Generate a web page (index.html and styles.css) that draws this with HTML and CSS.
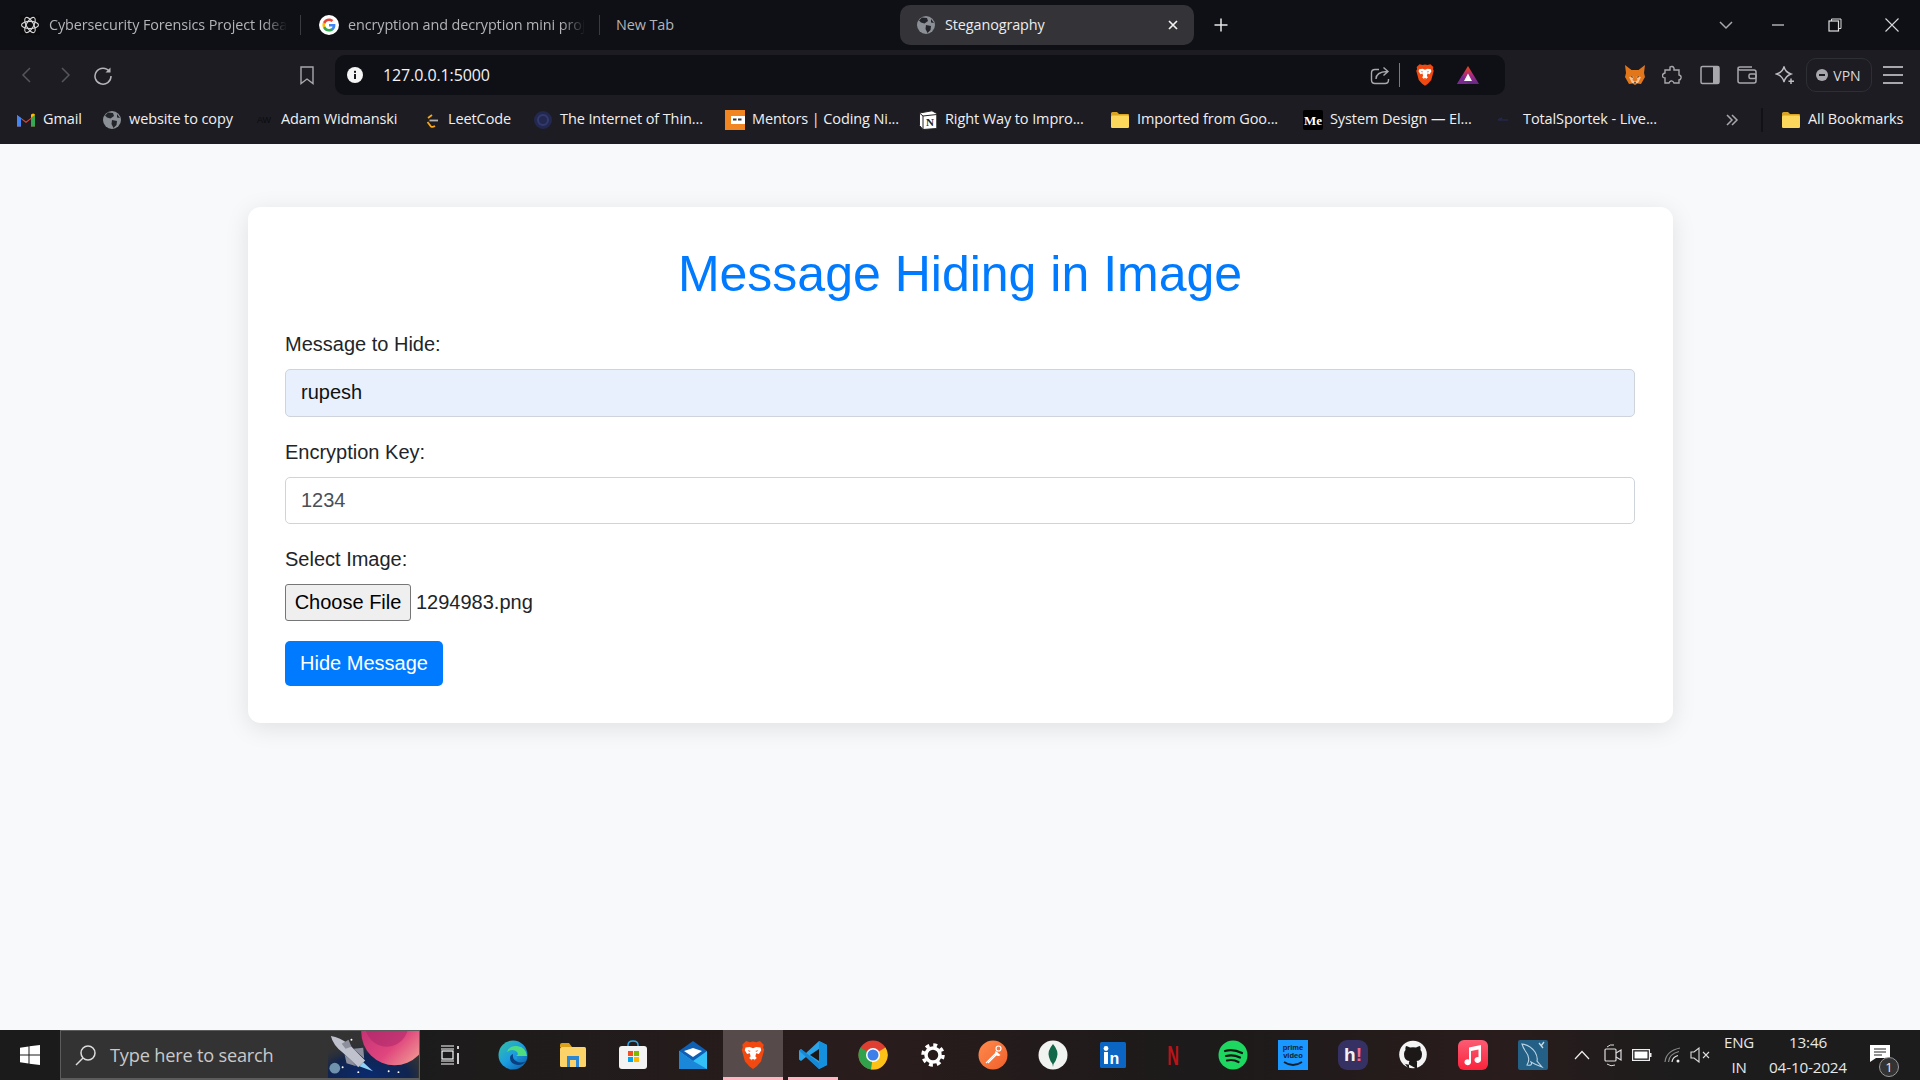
FILE: index.html
```html
<!DOCTYPE html>
<html lang="en">
<head>
<meta charset="utf-8">
<title>Steganography</title>
<link rel="stylesheet" href="styles.css">
</head>
<body>
<svg class="defs" width="0" height="0" aria-hidden="true">
  <defs>
    <symbol id="globe" viewBox="0 0 20 20">
      <circle cx="10" cy="10" r="9" fill="#8b8f96"/>
      <path d="M6 2.500 L11 3 L12 6 L8.500 8.500 L5 7.500 L3 5.500Z M10 10 L15 11 L14.500 15 L11.500 18 L9.500 14Z M15 4 L18 8 L15 7.500Z" fill="#24252b"/>
    </symbol>
    <symbol id="brave" viewBox="0 0 24 28">
      <path d="M5.500 1 L9 2 L12 1.300 L15 2 L18.500 1 L22 4.500 L21.500 7 L22.500 9 L19.500 20 L15.500 24.500 L12 27 L8.500 24.500 L4.500 20 L1.500 9 L2.500 7 L2 4.500Z" fill="#f1490f"/>
      <path d="M5 7 L9 6.500 L12 7.600 L15 6.500 L19 7 L19.700 9.500 L17.500 13 L15 12.300 L14.200 15.200 L15.500 16.800 L12 20 L8.500 16.800 L9.800 15.200 L9 12.300 L6.500 13 L4.300 9.500Z" fill="#fff"/>
      <path d="M7 9.600 L10 10.200 L8.400 11Z M17 9.600 L14 10.200 L15.600 11Z M10.500 18 L13.500 18 L12 22Z" fill="#f1490f"/>
    </symbol>
    <symbol id="folder" viewBox="0 0 20 20">
      <path d="M1 3.500 Q1 2 2.500 2 L7 2 L9 4 L18 4 Q19 4 19 5 L19 16 Q19 18 17 18 L3 18 Q1 18 1 16Z" fill="#d9a520"/>
      <rect x="1" y="5.500" width="18" height="12.500" rx="1.500" fill="#fbd75b"/>
    </symbol>
    <linearGradient id="planet" x1="0" y1="0" x2="1" y2="1">
      <stop offset="0" stop-color="#b3266e"/><stop offset=".6" stop-color="#e0467e"/><stop offset="1" stop-color="#f6b79a"/>
    </linearGradient>
    <radialGradient id="space" cx=".45" cy=".95" r=".75">
      <stop offset="0" stop-color="#0a2a70"/><stop offset=".6" stop-color="#10244f"/><stop offset="1" stop-color="#333" stop-opacity="0"/>
    </radialGradient>
    <linearGradient id="edgeg" x1="0" y1="0" x2="1" y2="1">
      <stop offset="0" stop-color="#35c1a0"/><stop offset=".5" stop-color="#1b9de2"/><stop offset="1" stop-color="#0c59a4"/>
    </linearGradient>
    <linearGradient id="musicg" x1="0" y1="0" x2="0" y2="1">
      <stop offset="0" stop-color="#fb5c74"/><stop offset="1" stop-color="#fa233b"/>
    </linearGradient>
    <linearGradient id="postg" x1="0" y1="0" x2="1" y2="1">
      <stop offset="0" stop-color="#ff8a4c"/><stop offset="1" stop-color="#f0602c"/>
    </linearGradient>
    <linearGradient id="batg" x1="0" y1="0" x2="0" y2="1">
      <stop offset="0" stop-color="#f1490f"/><stop offset=".55" stop-color="#a3288a"/><stop offset="1" stop-color="#5e2a86"/>
    </linearGradient>
  </defs>
</svg>

<div class="app">
  <header class="chrome">
    <div class="tabstrip">
      <div class="tab tab-first">
        <svg class="fav" viewBox="0 0 20 20"><rect width="20" height="20" fill="#0c0c0f"/><g fill="none" stroke="#d6d6d8" stroke-width="1.100"><ellipse cx="10" cy="10" rx="8.500" ry="3.600"/><ellipse cx="10" cy="10" rx="8.500" ry="3.600" transform="rotate(60 10 10)"/><ellipse cx="10" cy="10" rx="8.500" ry="3.600" transform="rotate(120 10 10)"/></g></svg>
        <span class="tab-title fade">Cybersecurity Forensics Project Idea</span>
      </div>
      <i class="tab-sep"></i>
      <div class="tab tab-second">
        <svg class="fav" viewBox="0 0 20 20"><circle cx="10" cy="10" r="10" fill="#fff"/><path d="M16.400 10.200c0-.5 0-.9-.1-1.300H10v2.500h3.600c-.2.800-.6 1.500-1.300 2v1.600h2.100c1.300-1.100 2-2.800 2-4.800z" fill="#4285f4"/><path d="M10 16.500c1.800 0 3.300-.6 4.400-1.600l-2.100-1.600c-.6.400-1.400.6-2.300.6-1.700 0-3.200-1.200-3.700-2.700H4.100v1.700C5.200 15.100 7.400 16.500 10 16.500z" fill="#34a853"/><path d="M6.300 11.200c-.3-.8-.3-1.600 0-2.400V7.100H4.100c-.9 1.800-.9 4 0 5.800z" fill="#fbbc05"/><path d="M10 5.900c1 0 1.800.3 2.500 1l1.900-1.900C13.200 4 11.700 3.400 10 3.400 7.400 3.400 5.200 4.900 4.100 7.100l2.200 1.700C6.800 7.100 8.300 5.900 10 5.900z" fill="#ea4335"/></svg>
        <span class="tab-title fade">encryption and decryption mini proj</span>
      </div>
      <i class="tab-sep"></i>
      <div class="tab tab-third"><span class="tab-title">New Tab</span></div>
      <div class="tab tab-active">
        <svg class="fav"><use href="#globe"/></svg>
        <span class="tab-title active-title">Steganography</span>
        <svg class="tab-close" viewBox="0 0 10 10"><path d="M1 1 L9 9 M9 1 L1 9" stroke="#f1f1f1" stroke-width="1.700"/></svg>
      </div>
      <div class="newtab"><svg class="w14" viewBox="0 0 14 14"><path d="M7 .5 V13.500 M.5 7 H13.500" stroke="#e6e6e6" stroke-width="1.500"/></svg></div>
      <div class="win-controls">
        <div class="chev"><svg class="w14" viewBox="0 0 14 14"><path d="M1 4 L7 10 L13 4" fill="none" stroke="#a8a8ac" stroke-width="1.500"/></svg></div>
        <div class="ctl"><svg class="w14" viewBox="0 0 14 14"><path d="M1 7 H13" stroke="#d4d4d4" stroke-width="1.200"/></svg></div>
        <div class="ctl"><svg class="w14" viewBox="0 0 14 14"><rect x="1" y="3" width="9.500" height="10" fill="none" stroke="#e0e0e0" stroke-width="1.200"/><path d="M3.500 3 V1 H13 V10.500 H10.500" fill="none" stroke="#e0e0e0" stroke-width="1"/></svg></div>
        <div class="ctl"><svg class="w14" viewBox="0 0 14 14"><path d="M.5 .5 L13.500 13.500 M13.500 .5 L.5 13.500" stroke="#d8d8d8" stroke-width="1.100"/></svg></div>
      </div>
    </div>

    <div class="toolbar">
      <div class="nav">
        <div class="navbtn"><svg class="w20" viewBox="0 0 20 20"><path d="M13 3 L6 10 L13 17" fill="none" stroke="#55565c" stroke-width="1.500"/></svg></div>
        <div class="navbtn"><svg class="w20" viewBox="0 0 20 20"><path d="M7 3 L14 10 L7 17" fill="none" stroke="#55565c" stroke-width="1.500"/></svg></div>
        <div class="navbtn"><svg class="w20" viewBox="0 0 20 20"><path d="M16.500 6.500 A8 8 0 1 0 18 11" fill="none" stroke="#b5b5b9" stroke-width="1.500"/><path d="M17.500 2.500 V7.500 H12.500Z" fill="#b5b5b9"/></svg></div>
        <div class="navbtn bookmark"><svg class="w20" viewBox="0 0 20 20"><path d="M4 2 H16 V18.500 L10 14 L4 18.500Z" fill="none" stroke="#a8a8ac" stroke-width="1.400"/></svg></div>
      </div>
      <div class="urlbar">
        <svg class="info" viewBox="0 0 16 16"><circle cx="8" cy="8" r="8" fill="#f5f5f5"/><rect x="7" y="7" width="2" height="5" fill="#16171c"/><rect x="7" y="3.800" width="2" height="2" fill="#16171c"/></svg>
        <span class="url">127.0.0.1:5000</span>
        <svg class="share" viewBox="0 0 20 20"><path d="M9 4.500 H5 Q1.500 4.500 1.500 8 V15 Q1.500 18.500 5 18.500 H15 Q18.500 18.500 18.500 15 V14" fill="none" stroke="#a8a8ac" stroke-width="1.400"/><path d="M6 14 Q6 7 17 6.500 M13.500 2.500 L18 6.500 L13.500 10.500" fill="none" stroke="#a8a8ac" stroke-width="1.400"/></svg>
        <i class="url-sep"></i>
        <svg class="brave-url"><use href="#brave"/></svg>
        <svg class="bat" viewBox="0 0 24 20"><path d="M12 1 L23 19 H1Z" fill="url(#batg)"/><path d="M1 19 L6.500 10 L12 19Z" fill="#7a2a8f"/><path d="M8 16 L12 8.500 L16 16Z" fill="#fff"/></svg>
      </div>
      <div class="exts">
        <div class="ext"><svg class="w22" viewBox="0 0 22 22"><path d="M1 1 L7.500 6 H14.500 L21 1 L20 9 L21 13 L17 20 L13.500 19.500 L11 21 L8.500 19.500 L5 20 L1 13 L2 9Z" fill="#e2761b"/><path d="M5 13 L9.500 12.500 L8.500 16 L11 18 L13.500 16 L12.500 12.500 L17 13 L14 19 H8Z" fill="#f6c49a"/><path d="M7 12 L9 13 L8 14Z M15 12 L13 13 L14 14Z M10 18 H12 L11 19.500Z" fill="#222"/></svg></div>
        <div class="ext"><svg class="w20" viewBox="0 0 20 20"><path d="M8 2 Q10.500 .5 12 3 V5 H17 V10 Q19.500 10.500 19 13 Q18.500 15 17 15 V18 H12 Q11 15.500 9 16 Q7.500 16.500 7 18 H3 V13 Q.5 13 .5 10.500 Q.5 8.500 3 8 V5 H8Z" fill="none" stroke="#a8a8ac" stroke-width="1.400"/></svg></div>
        <div class="ext"><svg class="w20" viewBox="0 0 20 20"><rect x="1" y="1.500" width="18" height="17" rx="1.500" fill="none" stroke="#a8a8ac" stroke-width="1.500"/><rect x="13" y="1.500" width="6" height="17" fill="#a8a8ac"/></svg></div>
        <div class="ext"><svg class="w20" viewBox="0 0 20 20"><path d="M17 5 H3 Q1 5 1 3.500 Q1 2 3 2 H15 M1 3.500 V16 Q1 18 3 18 H17 Q19 18 19 16 V7 Q19 5 17 5" fill="none" stroke="#a8a8ac" stroke-width="1.500"/><rect x="12" y="9" width="7" height="4.500" rx="1.500" fill="none" stroke="#a8a8ac" stroke-width="1.500"/></svg></div>
        <div class="ext"><svg class="w20" viewBox="0 0 20 20"><path d="M9 1.500 Q10 7 16 9 Q10.500 11 9 17 Q7.500 11 1.500 9 Q8 7 9 1.500Z" fill="none" stroke="#bdbdc1" stroke-width="1.400"/><path d="M16 13.500 V19 M13.500 16.200 H19" stroke="#bdbdc1" stroke-width="1.500"/></svg></div>
        <div class="vpn"><i class="vpn-dot"></i><span>VPN</span></div>
        <div class="menu"><i></i><i></i><i></i></div>
      </div>
    </div>

    <nav class="bookmarks">
      <a class="bm"><svg class="fav" viewBox="0 0 20 20"><path d="M1 5 L10 11.500 L19 5 V16.500 H15 V9 L10 13 L5 9 V16.500 H1Z" fill="#ea4335"/><path d="M1 5 V16.500 H5 V8Z" fill="#4285f4"/><path d="M15 8 V16.500 H19 V5Z" fill="#34a853"/><path d="M15 8 V4.500 L17 3.500 Q19 3.500 19 5Z" fill="#fbbc05"/></svg><span>Gmail</span></a>
      <a class="bm"><svg class="fav"><use href="#globe"/></svg><span>website to copy</span></a>
      <a class="bm"><svg class="fav" viewBox="0 0 20 20"><text x="10" y="13" class="aw">AW</text></svg><span>Adam Widmanski</span></a>
      <a class="bm"><svg class="fav" viewBox="0 0 20 20"><path d="M11 1 L4 9 Q2.500 11 4 13 L8 17.500 Q10 19 12.500 17.500" fill="none" stroke="#1f1f1f" stroke-width="1.800"/><path d="M7 8 L11 5 M6.500 12 L10 16.500 Q11.500 17.500 14 16" fill="none" stroke="#f5a623" stroke-width="1.800"/><path d="M8.500 10.500 H17" stroke="#b3b3b3" stroke-width="1.800"/></svg><span>LeetCode</span></a>
      <a class="bm"><svg class="fav" viewBox="0 0 20 20"><circle cx="10" cy="10" r="9" fill="#23284f"/><circle cx="10" cy="10" r="5" fill="none" stroke="#343a70" stroke-width="2"/></svg><span>The Internet of Thin...</span></a>
      <a class="bm"><svg class="fav" viewBox="0 0 20 20"><rect width="20" height="20" fill="#f08522"/><rect x="6" y="6" width="14" height="8" fill="#fff"/><rect x="8" y="8.500" width="3.500" height="2" fill="#333"/><rect x="13" y="8.500" width="3.500" height="2" fill="#333"/></svg><span>Mentors | Coding Ni...</span></a>
      <a class="bm"><svg class="fav" viewBox="0 0 20 20"><path d="M1.500 3 L14 .8 L18.800 3.500 V18.500 L5 19.500 L1.500 15.500Z" fill="#fff" stroke="#222" stroke-width="1"/><path d="M1.500 3 L5 6 L18.800 4.500 M5 6 V19.500" fill="none" stroke="#222" stroke-width="1"/><text x="12" y="16" class="notion">N</text></svg><span>Right Way to Impro...</span></a>
      <a class="bm"><svg class="fav"><use href="#folder"/></svg><span>Imported from Goo...</span></a>
      <a class="bm"><svg class="fav" viewBox="0 0 20 20"><rect width="20" height="20" rx="2" fill="#000"/><text x="1" y="15" class="medium">Me</text></svg><span>System Design — El...</span></a>
      <a class="bm"><svg class="fav" viewBox="0 0 20 20"><path d="M2 10 H12 M2 10 L6 8" stroke="#23274a" stroke-width="1.500" fill="none"/></svg><span>TotalSportek - Live...</span></a>
      <div class="bm-more"><svg class="w14" viewBox="0 0 14 14"><path d="M2 2 L7 7 L2 12 M7 2 L12 7 L7 12" fill="none" stroke="#a8a8ac" stroke-width="1.500"/></svg></div>
      <a class="bm bm-all"><svg class="fav"><use href="#folder"/></svg><span>All Bookmarks</span></a>
    </nav>
  </header>

  <main class="page">
    <form class="card">
      <h1 class="title">Message Hiding in Image</h1>
      <div class="group">
        <label class="label" for="msg">Message to Hide:</label>
        <input class="control control-filled" id="msg" type="text" value="rupesh">
      </div>
      <div class="group">
        <label class="label" for="key">Encryption Key:</label>
        <input class="control" id="key" type="text" value="1234">
      </div>
      <div class="group">
        <label class="label">Select Image:</label>
        <div class="file-row"><button class="file-btn" type="button">Choose File</button><span class="file-name">1294983.png</span></div>
      </div>
      <button class="submit" type="button">Hide Message</button>
    </form>
  </main>

  <footer class="taskbar">
    <div class="start"><svg class="w20" viewBox="0 0 20 20"><path d="M0 2.800 L8.500 1.500 V9.500 H0Z M9.500 1.300 L20 0 V9.500 H9.500Z M0 10.500 H8.500 V18.500 L0 17.200Z M9.500 10.500 H20 V20 L9.500 18.700Z" fill="#fff"/></svg></div>
    <div class="search">
      <svg class="search-icon" viewBox="0 0 22 22"><circle cx="13" cy="9" r="7" fill="none" stroke="#ddd" stroke-width="1.500"/><path d="M8 14 L1 21" stroke="#ddd" stroke-width="1.500"/></svg>
      <span class="search-text">Type here to search</span>
      <svg class="search-art" viewBox="0 0 92 49">
        <rect width="92" height="49" fill="url(#space)"/>
        <circle cx="68" cy="1" r="34" fill="url(#planet)"/>
        <circle cx="60" cy="-6" r="22" fill="#a62468" opacity=".5"/>
        <path d="M3 5 Q12 6 22 14 L38 30 L31 37 L15 22 Q5 14 3 5Z" fill="#bfc2cc"/>
        <path d="M14 13 L21 9 L24 16 L18 18Z M26 18 L36 17 L37 28Z M17 24 L24 30 L29 36 L19 33Z" fill="#8d909c"/>
        <path d="M36 32 L46 41 L32 36Z" fill="#8fd2f7"/>
        <circle cx="7" cy="38" r="5.500" fill="#6f93ad"/>
        <g fill="#fff"><circle cx="24" cy="9" r="1"/><circle cx="15" cy="37" r="1"/><circle cx="31" cy="42" r="1"/><circle cx="62" cy="41" r="1"/><circle cx="72" cy="42" r="1"/></g>
      </svg>
    </div>
    <div class="apps">
      <div class="app-cell app-first"><svg class="w20" viewBox="0 0 20 20"><g fill="none" stroke="#fff" stroke-width="1.200"><path d="M1 1 H14 M1 4 H14 M1 16 H14 M1 19 H14"/><rect x="2" y="6" width="11" height="8"/></g><path d="M18 1 V4 M18 8 V19" stroke="#fff" stroke-width="1.600"/></svg></div>
      <div class="app-cell"><svg class="w30" viewBox="0 0 30 30"><circle cx="15" cy="15" r="14.500" fill="url(#edgeg)"/><path d="M29 16 Q28 7 19 6 Q11 5.500 9 12 Q15 8 19 12 Q21 15 18 16Z" fill="#4fdc80"/><path d="M12 18 Q12 24 20 25 Q25 25 28 21 Q23 24 18 21 Q14 19 15 14 Q12 15 12 18Z" fill="#0a3f82"/><circle cx="18" cy="18" r="1" fill="#1b9de2"/></svg></div>
      <div class="app-cell"><svg class="w28" viewBox="0 0 28 26"><path d="M1 3 Q1 1 3 1 H10 L13 5 H1Z" fill="#dca11a"/><rect x="1" y="5" width="26" height="20" rx="1.500" fill="#fcd368"/><path d="M8 25 V14 H20 V25 H17 V18 H11 V25Z" fill="#2b87d3"/></svg></div>
      <div class="app-cell"><svg class="w30" viewBox="0 0 30 30"><path d="M10 7 V5 Q10 1 15 1 Q20 1 20 5 V7" fill="none" stroke="#2aa7e8" stroke-width="1.500"/><rect x="1" y="6" width="28" height="23" rx="3" fill="#f3f3f3"/><rect x="10" y="11" width="5" height="5" fill="#f25022"/><rect x="16" y="11" width="5" height="5" fill="#7fba00"/><rect x="10" y="17" width="5" height="5" fill="#00a4ef"/><rect x="16" y="17" width="5" height="5" fill="#ffb900"/></svg></div>
      <div class="app-cell"><svg class="w30" viewBox="0 0 30 30"><path d="M15 1 L29 11 V29 H1 V11Z" fill="#0f5fb3"/><path d="M6 11 L15 8 L24 11 L15 17Z" fill="#fff"/><path d="M1 11 L15 21 L29 11 V29 H1Z" fill="#32c0f7"/><path d="M1 29 L1 11 L15 21 L29 29Z" fill="#1a87d8"/></svg></div>
      <div class="app-cell app-active"><svg class="brave-task"><use href="#brave"/></svg></div>
      <div class="app-cell app-open"><svg class="w30" viewBox="0 0 30 30"><path d="M21 1 L29 5 V25 L21 29 L8 17 L3 21 L1 19.500 V10.500 L3 9 L8 13Z" fill="#2aa4ea"/><path d="M21 9 L12 15 L21 21Z" fill="#1b1717"/><path d="M1 10.500 L3 9 L21 23 V29 Z" fill="#0f7ccc" opacity=".7"/><path d="M21 1 L29 5 V25 L21 29Z" fill="#1590de"/></svg></div>
      <div class="app-cell"><svg class="w30" viewBox="0 0 30 30"><circle cx="15" cy="15" r="14.500" fill="#de3f30"/><path d="M15 15 L2.500 7.500 A14.500 14.500 0 0 0 13 29.400Z" fill="#31a24c"/><path d="M15 15 L13 29.400 A14.500 14.500 0 0 0 27.500 7.500Z" fill="#fbc117"/><circle cx="15" cy="15" r="7" fill="#fff"/><circle cx="15" cy="15" r="5.500" fill="#3f7fea"/></svg></div>
      <div class="app-cell"><svg class="w24" viewBox="0 0 24 24"><circle cx="12" cy="12" r="7" fill="none" stroke="#fff" stroke-width="3.500"/><circle cx="12" cy="12" r="10" fill="none" stroke="#fff" stroke-width="3.500" stroke-dasharray="3.900 3.950"/></svg></div>
      <div class="app-cell"><svg class="w30" viewBox="0 0 30 30"><circle cx="15" cy="15" r="14.500" fill="url(#postg)"/><path d="M8 23 L19 12 M10 23 L20 13" stroke="#fff" stroke-width="1.100"/><circle cx="20.500" cy="8.500" r="2.500" fill="none" stroke="#fff" stroke-width="1.200"/><path d="M17.500 11 L22.500 15 Q20 17 17 14.500Z" fill="#fff"/></svg></div>
      <div class="app-cell"><svg class="w30" viewBox="0 0 30 30"><circle cx="15" cy="15" r="14.500" fill="#f1f3f1"/><path d="M15 4 Q21 11 19 17 Q18 21 15.500 24 L15 27 L14.500 24 Q12 21 11 17 Q9 11 15 4Z" fill="#12694a"/></svg></div>
      <div class="app-cell"><svg class="w26" viewBox="0 0 26 26"><rect width="26" height="26" rx="1.500" fill="#0a66c2"/><circle cx="6" cy="6.500" r="2.400" fill="#fff"/><rect x="4" y="10" width="4" height="12" fill="#fff"/><text x="9.500" y="22" class="in">n</text></svg></div>
      <div class="app-cell"><svg class="w30" viewBox="0 0 30 30"><text transform="translate(15 25) scale(.6 1)" class="netflix">N</text></svg></div>
      <div class="app-cell"><svg class="w30" viewBox="0 0 30 30"><circle cx="15" cy="15" r="14.500" fill="#1ed760"/><path d="M7 11 Q15 8.500 24 13 M8 16 Q15 14 22 17.500 M9 20.500 Q15 19 20.500 22" fill="none" stroke="#151515" stroke-width="2.200" stroke-linecap="round"/></svg></div>
      <div class="app-cell"><svg class="w30" viewBox="0 0 30 30"><rect width="30" height="30" fill="#1a98ff"/><text x="15" y="10" class="prime">prime</text><text x="15" y="18" class="prime">video</text><path d="M6 22 Q15 28 24 22" fill="none" stroke="#10202e" stroke-width="1.800"/></svg></div>
      <div class="app-cell"><svg class="w30" viewBox="0 0 30 30"><rect width="30" height="30" rx="9" fill="#353163"/><text x="15" y="21" class="hi"><tspan fill="#f2f2f2">h</tspan><tspan fill="#f26d85">!</tspan></text></svg></div>
      <div class="app-cell"><svg class="w30" viewBox="0 0 30 30"><circle cx="15" cy="14.500" r="13.800" fill="#f4f4f4"/><path d="M11 29 V24.500 Q7 25 5.500 22 M19 29 V24 Q19.500 21.500 18.500 21 Q24 20.500 24 14 Q24 11.500 22.500 10 Q23 8 22 6 Q20.500 6 18 7.500 Q15 6.800 12 7.500 Q9.500 6 8 6 Q7 8 7.500 10 Q6 11.500 6 14 Q6 20.500 11.500 21 Q10.500 22 11 24.500" fill="#1c1818"/></svg></div>
      <div class="app-cell"><svg class="w30" viewBox="0 0 30 30"><rect width="30" height="30" rx="6" fill="url(#musicg)"/><path d="M11 7.500 L23 5 V19.500 A3.300 3 0 1 1 20.500 17 V9.500 L13 11 V22 A3.300 3 0 1 1 11 19.500Z" fill="#fff"/></svg></div>
      <div class="app-cell"><svg class="w30" viewBox="0 0 30 30"><rect width="30" height="30" rx="2" fill="#245f85"/><path d="M4 4 Q12 5 17 12 Q20 17 19 21 L24 27 Q16 24 13 22 Q15 26 9 25 Q13 18 8 12 Q5 8 4 4Z" fill="none" stroke="#b9d3e2" stroke-width="1.100"/><path d="M21 3 L25 8 M26 2 L23 6" stroke="#c8dbe6" stroke-width="1.300"/></svg></div>
    </div>
    <div class="tray">
      <svg class="tray-chev" viewBox="0 0 16 10"><path d="M1 9 L8 1.500 L15 9" fill="none" stroke="#eee" stroke-width="1.200"/></svg>
      <svg class="tray-cam" viewBox="0 0 18 24"><path d="M3 4 Q6 1 10 2 M3 21 Q7 24 11 22" fill="none" stroke="#ddd" stroke-width="1"/><rect x="1" y="6" width="11" height="12" rx="1" fill="none" stroke="#ddd" stroke-width="1.200"/><path d="M12 10 L17 7 V17 L12 14" fill="none" stroke="#ddd" stroke-width="1.200"/></svg>
      <svg class="tray-bat" viewBox="0 0 20 12"><rect x=".6" y=".6" width="16.800" height="10.800" fill="none" stroke="#eee" stroke-width="1.200"/><rect x="2.500" y="2.500" width="13" height="7" fill="#fff"/><rect x="18" y="4" width="1.500" height="4" fill="#eee"/></svg>
      <svg class="tray-wifi" viewBox="0 0 18 16"><path d="M1 15 Q2 4 16 1 M4.500 15 Q5 7 15 4.500" fill="none" stroke="#8a8a8a" stroke-width="1.200"/><path d="M8 15 Q8.500 10 14 8.500" fill="none" stroke="#ddd" stroke-width="1.200"/><circle cx="14" cy="14" r="1.500" fill="#eee"/></svg>
      <svg class="tray-vol" viewBox="0 0 20 16"><path d="M1 5 H4 L9 1 V15 L4 11 H1Z" fill="none" stroke="#ddd" stroke-width="1.100"/><path d="M13 5 L19 11 M19 5 L13 11" stroke="#ddd" stroke-width="1.100"/></svg>
      <div class="lang"><span>ENG</span><span>IN</span></div>
      <div class="clock"><span>13:46</span><span>04-10-2024</span></div>
      <div class="notify">
        <svg class="note" viewBox="0 0 20 17"><path d="M0 0 H20 V13 H6 L0 17Z" fill="#fff"/><path d="M4 4 H16 M4 7 H16 M4 10 H12" stroke="#222" stroke-width="1.100"/></svg>
        <span class="badge">1</span>
      </div>
    </div>
  </footer>
</div>
</body>
</html>
```

FILE: styles.css
```css
* { box-sizing: border-box; }
html, body { margin: 0; height: 100%; overflow: hidden; }
body { font-family: "Liberation Sans", Arial, sans-serif; }
.defs { position: absolute; }
.app { width: 1920px; height: 1080px; display: flex; flex-direction: column; background: #f8f9fa; }
svg { display: block; flex: none; }
.w14 { width: 14px; height: 14px; }
.w20 { width: 20px; height: 20px; }
.w22 { width: 22px; height: 22px; }
.w24 { width: 24px; height: 24px; }
.w26 { width: 26px; height: 26px; }
.w28 { width: 28px; height: 26px; }
.w30 { width: 30px; height: 30px; }
.fav { width: 20px; height: 20px; }

/* browser chrome */
.chrome { flex: none; font-family: "Open Sans", "Noto Sans", sans-serif; }
.tabstrip { height: 50px; background: #0f1015; display: flex; align-items: center; padding-left: 20px; color: #b4b4b8; font-size: 14.4px; }
.tab { display: flex; align-items: center; gap: 9px; height: 40px; }
.tab-title { white-space: nowrap; letter-spacing: -.1px; margin-bottom: 2px; }
.fade { -webkit-mask-image: linear-gradient(90deg, #000 90%, transparent); mask-image: linear-gradient(90deg, #000 90%, transparent); }
.tab-first { width: 280px; }
.tab-second { width: 280px; margin-left: 18px; }
.tab-third { width: 284px; margin-left: 16px; }
.tab-sep { width: 1px; height: 20px; background: #3a3b40; flex: none; }
.tab-active { width: 294px; background: #333338; border-radius: 10px; padding: 0 16px; }
.active-title { color: #ececee; flex: 1; }
.tab-close { width: 10px; height: 10px; }
.newtab { width: 54px; display: flex; justify-content: center; }
.win-controls { margin-left: auto; display: flex; align-items: center; }
.chev { width: 46px; display: flex; justify-content: center; }
.ctl { width: 57px; display: flex; justify-content: center; }

.toolbar { height: 45px; background: #1c1c22; display: flex; align-items: flex-end; }
.nav { width: 335px; height: 40px; display: grid; grid-template-columns: repeat(3, 38px) 38px; justify-content: start; padding-left: 8px; }
.navbtn { display: flex; align-items: center; justify-content: center; }
.bookmark { grid-column: 4; margin-left: 185px; }
.urlbar { width: 1170px; height: 40px; background: #0f1015; border-radius: 10px; display: flex; align-items: center; padding-left: 12px; }
.info { width: 16px; height: 16px; }
.url { color: #f3f3f5; font-size: 16px; margin-left: 20px; letter-spacing: -.1px; }
.share { width: 20px; height: 20px; margin-left: auto; }
.url-sep { width: 1px; height: 24px; background: #7a7a7e; margin-left: 9px; }
.brave-url { width: 20px; height: 26px; margin-left: 15px; }
.bat { width: 24px; height: 20px; margin-left: 21px; margin-right: 25px; }
.exts { display: flex; align-items: center; height: 40px; margin-left: 111px; }
.ext { width: 37.5px; display: flex; justify-content: center; }
.vpn { width: 66px; height: 34px; margin-left: 2px; border: 1px solid #2e2e35; border-radius: 10px; display: flex; align-items: center; justify-content: center; gap: 5px; font-size: 14px; color: #d8d8dc; }
.vpn-dot { width: 12px; height: 12px; border-radius: 50%; background: #a8a8ac; position: relative; }
.vpn-dot::after { content: ""; position: absolute; left: 3px; right: 3px; top: 5px; height: 2px; background: #1c1c22; }
.menu { width: 20px; margin-left: 11px; display: flex; flex-direction: column; gap: 6px; }
.menu i { height: 2px; background: #a8a8ac; display: block; }

.bookmarks { height: 49px; background: #1c1c22; display: grid; grid-template-columns: 86px 152px 167px 112px 192px 193px 192px 193px 193px 236px 29px 1fr; align-items: center; padding-left: 16px; color: #efeff1; font-size: 14.5px; }
.bm { display: flex; align-items: center; gap: 7px; white-space: nowrap; letter-spacing: -.1px; }
.bm span { margin-bottom: 2px; }
.bm-more { display: flex; }
.bm-more svg { margin-left: -7px; }
.bm-all { border-left: 2px solid #111216; padding-left: 18px; height: 24px; }
.aw { font: 9px "Liberation Sans", sans-serif; fill: #0c0c0c; text-anchor: middle; }
.notion { font: bold 11px "Liberation Serif", serif; fill: #222; text-anchor: middle; }
.medium { font: bold 13px "Liberation Serif", serif; fill: #fff; }

/* page */
.page { flex: 1; min-height: 0; padding-top: 62.5px; }
.card { width: 1425px; margin: 0 auto; background: #fff; border-radius: 12.5px; padding: 37.5px 37.5px 36.5px; box-shadow: 0 5px 25px rgba(0, 0, 0, .1); }
.title { margin: 0 0 25px; font-size: 50px; line-height: 60px; font-weight: 400; text-align: center; color: #007bff; }
.group { margin-bottom: 20px; }
.label { display: block; margin-bottom: 10px; font-size: 20px; line-height: 30px; color: #212529; }
.control { display: block; width: 100%; height: 47.5px; padding: 7.5px 15px; border: 1.25px solid #ced4da; border-radius: 5px; font: 20px/30px "Liberation Sans", Arial, sans-serif; color: #495057; background: #fff; outline: 0; }
.control-filled { background: #e8f0fe; color: #111; }
.file-row { display: flex; align-items: center; height: 37px; font-size: 20px; color: #212529; }
.file-btn { height: 37px; width: 126px; padding: 0; background: #efefef; border: 1.25px solid #767676; border-radius: 3px; font: 20px "Liberation Sans", Arial, sans-serif; color: #000; }
.file-name { margin-left: 5px; }
.submit { display: block; height: 45px; width: 158px; padding: 0; border: 0; border-radius: 5px; background: #007bff; color: #fff; font: 20px "Liberation Sans", Arial, sans-serif; }

/* taskbar */
.taskbar { flex: none; height: 50px; display: flex; background: linear-gradient(90deg, #1b1b1b 0, #1b1b1b 20%, #2a1c1c 45%, #1c1a1a 62%, #2a1c1c 78%, #1c1c1c 88%); color: #e8e8e8; font-family: "Open Sans", "Noto Sans", sans-serif; }
.start { width: 60px; display: flex; align-items: center; justify-content: center; }
.search { width: 360px; background: #333; border: 1px solid #5c5c5c; border-width: 1px 1px 2px; display: flex; align-items: center; padding-left: 14px; position: relative; overflow: hidden; }
.search-icon { width: 22px; height: 22px; }
.search-text { margin-left: 13px; font-size: 18.2px; color: #c9c9c9; letter-spacing: -.2px; }
.search-art { width: 92px; height: 48px; position: absolute; right: 0; top: 0; }
.apps { display: flex; width: 1140px; }
.app-cell { width: 60px; flex: none; display: flex; align-items: center; justify-content: center; border-bottom: 3px solid transparent; padding-top: 3px; }
.app-first { margin-right: 3px; }
.app-active { background: #574a4a; border-bottom-color: #ffb6c1; }
.app-open { width: 50px; margin: 0 5px; border-bottom-color: #ffb6c1; }
.brave-task { width: 26px; height: 30px; }
.tray { flex: 1; display: flex; align-items: center; }
.tray-chev { width: 16px; height: 10px; margin-left: 14px; }
.tray-cam { width: 18px; height: 24px; margin-left: 14px; }
.tray-bat { width: 20px; height: 12px; margin-left: 10px; }
.tray-wifi { width: 18px; height: 16px; margin-left: 12px; }
.tray-vol { width: 20px; height: 16px; margin-left: 8px; }
.lang { width: 42px; margin-left: 8px; display: flex; flex-direction: column; align-items: center; font-size: 15px; line-height: 25px; letter-spacing: -.2px; }
.clock { width: 84px; margin-left: 6px; display: flex; flex-direction: column; align-items: center; font-size: 15.300px; line-height: 25px; letter-spacing: -.2px; white-space: nowrap; }
.notify { margin-left: 20px; position: relative; width: 30px; height: 50px; }
.note { width: 20px; height: 17px; position: absolute; left: 0; top: 15px; }
.badge { position: absolute; left: 9px; top: 27px; width: 20px; height: 20px; border: 1px solid #999; border-radius: 50%; background: #333; color: #eee; font-size: 13px; display: flex; align-items: center; justify-content: center; }
.in { font: bold 16px "Liberation Sans", sans-serif; fill: #fff; }
.netflix { font: bold 27px "Liberation Sans", sans-serif; fill: #b81419; text-anchor: middle; }
.prime { font: bold 7.500px "Liberation Sans", sans-serif; fill: #10202e; text-anchor: middle; }
.hi { font: bold 19px "Liberation Sans", sans-serif; text-anchor: middle; }
```
